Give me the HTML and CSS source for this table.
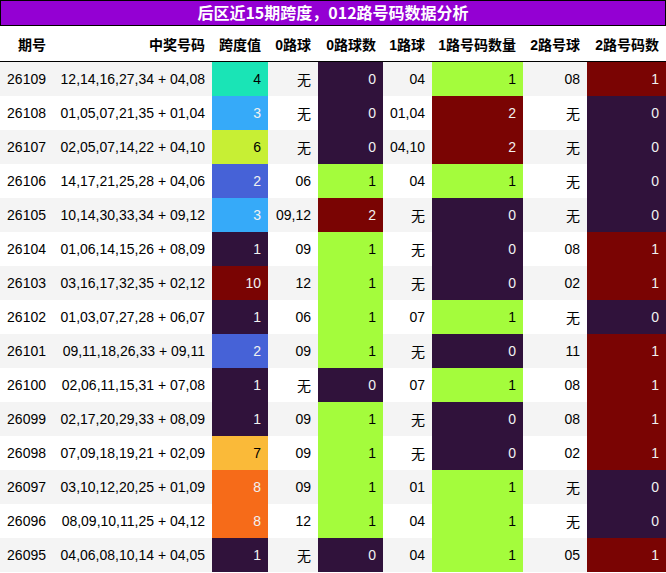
FILE: index.html
```html
<!DOCTYPE html>
<html lang="zh">
<head>
<meta charset="utf-8">
<link rel="stylesheet" href="styles.css">
</head>
<body>
<div class="wrap">
  <div class="title">后区近15期跨度，012路号码数据分析</div>
  <table class="grid">
    <colgroup>
      <col class="w1"><col class="w2"><col class="w3"><col class="w4"><col class="w5"><col class="w6"><col class="w7"><col class="w8"><col class="w9">
    </colgroup>
    <thead>
      <tr><th>期号</th><th>中奖号码</th><th>跨度值</th><th>0路球</th><th>0路球数</th><th>1路球</th><th>1路号码数量</th><th>2路号球</th><th>2路号码数</th></tr>
    </thead>
    <tbody>
      <tr><td>26109</td><td>12,14,16,27,34 + 04,08</td><td class="s4">4</td><td>无</td><td class="c0">0</td><td>04</td><td class="c1">1</td><td>08</td><td class="c2">1</td></tr>
      <tr><td>26108</td><td>01,05,07,21,35 + 01,04</td><td class="s3">3</td><td>无</td><td class="c0">0</td><td>01,04</td><td class="c2">2</td><td>无</td><td class="c0">0</td></tr>
      <tr><td>26107</td><td>02,05,07,14,22 + 04,10</td><td class="s6">6</td><td>无</td><td class="c0">0</td><td>04,10</td><td class="c2">2</td><td>无</td><td class="c0">0</td></tr>
      <tr><td>26106</td><td>14,17,21,25,28 + 04,06</td><td class="s2">2</td><td>06</td><td class="c1">1</td><td>04</td><td class="c1">1</td><td>无</td><td class="c0">0</td></tr>
      <tr><td>26105</td><td>10,14,30,33,34 + 09,12</td><td class="s3">3</td><td>09,12</td><td class="c2">2</td><td>无</td><td class="c0">0</td><td>无</td><td class="c0">0</td></tr>
      <tr><td>26104</td><td>01,06,14,15,26 + 08,09</td><td class="s1">1</td><td>09</td><td class="c1">1</td><td>无</td><td class="c0">0</td><td>08</td><td class="c2">1</td></tr>
      <tr><td>26103</td><td>03,16,17,32,35 + 02,12</td><td class="s10">10</td><td>12</td><td class="c1">1</td><td>无</td><td class="c0">0</td><td>02</td><td class="c2">1</td></tr>
      <tr><td>26102</td><td>01,03,07,27,28 + 06,07</td><td class="s1">1</td><td>06</td><td class="c1">1</td><td>07</td><td class="c1">1</td><td>无</td><td class="c0">0</td></tr>
      <tr><td>26101</td><td>09,11,18,26,33 + 09,11</td><td class="s2">2</td><td>09</td><td class="c1">1</td><td>无</td><td class="c0">0</td><td>11</td><td class="c2">1</td></tr>
      <tr><td>26100</td><td>02,06,11,15,31 + 07,08</td><td class="s1">1</td><td>无</td><td class="c0">0</td><td>07</td><td class="c1">1</td><td>08</td><td class="c2">1</td></tr>
      <tr><td>26099</td><td>02,17,20,29,33 + 08,09</td><td class="s1">1</td><td>09</td><td class="c1">1</td><td>无</td><td class="c0">0</td><td>08</td><td class="c2">1</td></tr>
      <tr><td>26098</td><td>07,09,18,19,21 + 02,09</td><td class="s7">7</td><td>09</td><td class="c1">1</td><td>无</td><td class="c0">0</td><td>02</td><td class="c2">1</td></tr>
      <tr><td>26097</td><td>03,10,12,20,25 + 01,09</td><td class="s8">8</td><td>09</td><td class="c1">1</td><td>01</td><td class="c1">1</td><td>无</td><td class="c0">0</td></tr>
      <tr><td>26096</td><td>08,09,10,11,25 + 04,12</td><td class="s8">8</td><td>12</td><td class="c1">1</td><td>04</td><td class="c1">1</td><td>无</td><td class="c0">0</td></tr>
      <tr><td>26095</td><td>04,06,08,10,14 + 04,05</td><td class="s1">1</td><td>无</td><td class="c0">0</td><td>04</td><td class="c1">1</td><td>05</td><td class="c2">1</td></tr>
    </tbody>
  </table>
</div>
</body>
</html>
```
FILE: styles.css
```css
html, body {
  margin: 0;
  padding: 0;
  background: #ffffff;
}
.wrap {
  width: 666px;
  font-family: "Liberation Sans", "Noto Sans CJK SC", sans-serif;
}
.title {
  box-sizing: border-box;
  height: 26px;
  border: 1px solid #000;
  background: #9400d3;
  color: #ffffff;
  font-family: "Noto Sans CJK SC", sans-serif;
  font-weight: bold;
  font-size: 16px;
  line-height: 23px;
  text-align: center;
}
.grid {
  width: 666px;
  border-collapse: collapse;
  table-layout: fixed;
  font-size: 14px;
  color: #000;
}
.w1 { width: 53px; }
.w2 { width: 159px; }
.w3 { width: 56px; }
.w4 { width: 50px; }
.w5 { width: 65px; }
.w6 { width: 49px; }
.w7 { width: 91px; }
.w8 { width: 64px; }
.w9 { width: 79px; }
.grid th {
  height: 35px;
  padding: 0 7px 0 0;
  text-align: right;
  font-weight: bold;
  font-size: 14px;
  border-bottom: 1px solid #000;
  background: #fff;
  white-space: nowrap;
}
.grid td {
  height: 34px;
  padding: 0 7px 0 0;
  text-align: right;
  white-space: nowrap;
}
.grid tbody tr:nth-child(odd) { background: #f4f4f4; }
.grid tbody tr:nth-child(even) { background: #ffffff; }

.s1 { background: #30123b; color: #f1f1f1; }
.s2 { background: #4662d7; color: #f1f1f1; }
.s3 { background: #36aaf9; color: #f1f1f1; }
.s4 { background: #1ae4b6; color: #000000; }
.s6 { background: #c7ef34; color: #000000; }
.s7 { background: #fabA39; color: #000000; }
.s8 { background: #f66b19; color: #f1f1f1; }
.s10 { background: #7a0403; color: #f1f1f1; }

.c0 { background: #30123b; color: #f1f1f1; }
.c1 { background: #a4fc3c; color: #000000; }
.c2 { background: #7a0403; color: #f1f1f1; }
```
